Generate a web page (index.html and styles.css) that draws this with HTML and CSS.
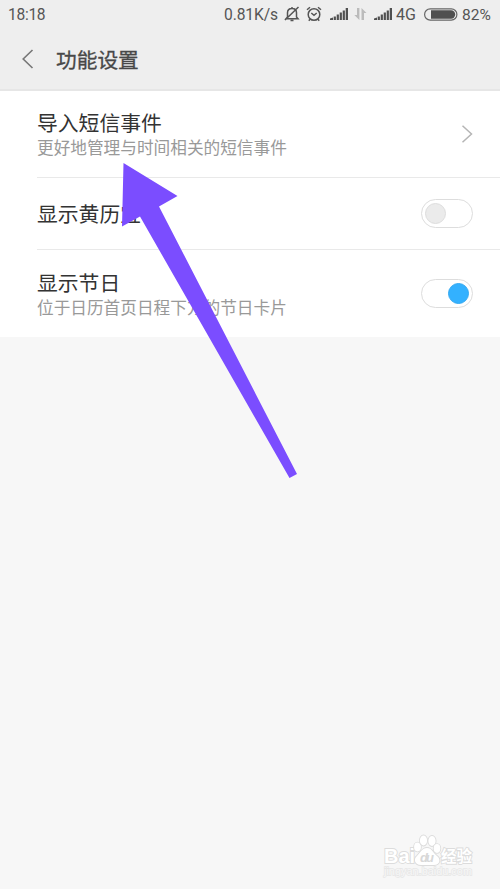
FILE: index.html
```html
<!DOCTYPE html>
<html lang="zh-CN">
<head>
<meta charset="utf-8">
<title>功能设置</title>
<link rel="stylesheet" href="styles.css">
</head>
<body>
<header class="header">
  <div class="status">
    <span class="time">18:18</span>
    <span class="speed">0.81K/s</span>
    <svg class="bell" width="16" height="16" viewBox="0 0 16 16"><path d="M3.5 11V6.8C3.5 4 5.2 2.5 8 2.5S12.5 4 12.5 6.8V11l1.5 1.7H2L3.5 11M8 1v1.5M6.5 14.5h3M1 14L14.5 1"/></svg>
    <svg class="alarm" width="16" height="16" viewBox="0 0 16 16"><circle cx="8" cy="8.5" r="5.8"/><path d="M1 3.8L4 1.2M12 1.2l3 2.6M5.3 7L8 9.3 10.7 7M4 13.2l-1.2 1.5M12 13.2l1.2 1.5"/></svg>
    <svg class="signal" width="18" height="12" viewBox="0 0 18 12"><path d="M0 12v-1.5l3-1V12zM3.7 12V8.5h2.2V12zM6.7 12V6.5h2.2V12zM9.7 12V4.5h2.2V12zM12.7 12V2.5h2.2V12zM15.7 12V0H18v12z"/></svg>
    <svg class="data" width="13" height="12" viewBox="0 0 13 12"><path d="M5.4 0v12L.3 7H3V0zM7.5 12V0l5 5H10v7z"/></svg>
    <svg class="signal second" width="18" height="12" viewBox="0 0 18 12"><path d="M0 12v-1.5l3-1V12zM3.7 12V8.5h2.2V12zM6.7 12V6.5h2.2V12zM9.7 12V4.5h2.2V12zM12.7 12V2.5h2.2V12zM15.7 12V0H18v12z"/></svg>
    <span class="network">4G</span>
    <svg class="battery" width="34" height="13" viewBox="0 0 34 13"><rect class="case" x=".6" y=".9" width="32.3" height="11.2" rx="5.6"/><path d="M7 2.3h20a4.2 4.2 0 0 1 0 8.4H7z"/></svg>
    <span class="percent">82%</span>
  </div>
  <div class="titlebar">
    <svg class="back" width="12" height="20" viewBox="0 0 12 20"><path d="M10.5 1L1.2 10l9.3 9"/></svg>
    <h1>功能设置</h1>
  </div>
</header>
<main class="list">
  <section class="row first">
    <div><h2>导入短信事件</h2><p>更好地管理与时间相关的短信事件</p></div>
    <svg class="chevron" width="12" height="18" viewBox="0 0 12 18"><path d="M1.5 .7L10.5 9l-9 8.3"/></svg>
  </section>
  <section class="row short">
    <h2>显示黄历宜</h2>
    <span class="switch"><i></i></span>
  </section>
  <section class="row last">
    <div><h2>显示节日</h2><p>位于日历首页日程下方的节日卡片</p></div>
    <span class="switch on"><i></i></span>
  </section>
</main>
<svg class="arrow" width="500" height="500" viewBox="0 0 500 500"><path d="M123.5 163L177.5 196 159 206.5 297 474 289.5 478 140 216.5 122 226.5z"/></svg>
<svg class="watermark" width="100" height="54" viewBox="0 0 100 54">
  <text class="brand" x="4" y="33" textLength="31" lengthAdjust="spacingAndGlyphs">Bai</text>
  <g class="paw"><ellipse cx="37.5" cy="17" rx="3.4" ry="4.4"/><ellipse cx="43.5" cy="10.5" rx="3.6" ry="5"/><ellipse cx="52" cy="11" rx="3.6" ry="5"/><ellipse cx="57" cy="18.5" rx="3.3" ry="4.4"/><path d="M47 18c-5 0-7 5-10 8-4 3-2 9 4 9h13c6 0 7-6 3-9s-5-8-10-8z"/></g>
  <text class="du" x="40" y="32" textLength="14">du</text>
  <text class="cn" x="61" y="32" textLength="31">经验</text>
  <text class="url" x="4" y="45" textLength="88" lengthAdjust="spacingAndGlyphs">jingyan.baidu.com</text>
</svg>
</body>
</html>
```
FILE: styles.css
```css
* { box-sizing: border-box; }
body { margin: 0; width: 500px; height: 889px; overflow: hidden; position: relative; background: #f7f7f7; font-family: "Noto Sans CJK SC", sans-serif; }
.header { height: 91px; background: #eee; border-bottom: 2px solid #e6e6e6; }
.status { height: 29px; display: flex; align-items: center; padding: 0 8px; font: 16px/29px Roboto, sans-serif; color: #555; white-space: nowrap; }
.time { width: 216px; font-size: 15.6px; letter-spacing: -.3px; padding-top: 1px; }
.speed { width: 60px; font-size: 15.6px; letter-spacing: -.1px; padding-top: 1px; }
.percent { margin-left: 4px; font-size: 15.5px; padding-top: 1px; }
.status svg { flex: none; fill: #505050; }
.status .bell, .status .alarm { fill: none; stroke: #555; stroke-width: 1.5; margin-top: -2px; }
.alarm { margin-left: 6px; }
.status .signal { margin-left: 8px; margin-top: -1px; }
.status .data { fill: #bbb; margin-left: 6px; margin-top: -1px; }
.status .second { margin-left: 7px; }
.network { margin-left: 4px; width: 22px; }
.battery { margin-left: 6px; margin-top: -1px; }
.battery .case { fill: none; stroke: #666; stroke-width: 1.2; }
.titlebar { height: 60px; display: flex; align-items: center; padding-left: 22px; }
.back { fill: none; stroke: #777; stroke-width: 1.6; }
h1, h2, p { margin: 0; font-weight: 400; white-space: nowrap; }
h1 { margin-left: 22px; font-size: 20.7px; line-height: 30px; color: #484848; -webkit-text-stroke: .3px #484848; }
.list { background: #fff; padding-left: 37px; height: 246px; }
.row { display: flex; align-items: center; justify-content: space-between; padding-right: 27px; }
.row + .row { border-top: 1px solid #e9e9e9; }
.first { height: 86px; padding-bottom: 1px; }
.short { height: 72px; }
.last { height: 87px; }
.last > div { padding-top: 2px; }
.short h2 { padding-bottom: 1px; }
h2 { font-size: 20.8px; line-height: 26px; color: #333; }
p { font-size: 16.67px; line-height: 24px; color: #999; }
.chevron { fill: none; stroke: #b5b5b5; stroke-width: 1.5; }
.switch { width: 52px; height: 29px; border: 1px solid #ddd; border-radius: 15px; padding: 3px; display: flex; align-items: center; }
.switch i { width: 21px; height: 21px; border-radius: 50%; background: #ebebeb; border: 1px solid #ddd; }
.switch.on { justify-content: flex-end; }
.switch.on i { background: #33b1ff; border-color: #33a9f2; }
.arrow { position: absolute; left: 0; top: 0; fill: #7b4dff; }
.watermark { position: absolute; left: 380px; top: 830px; fill: #fff; stroke: #dcdcdc; stroke-width: 1.8; paint-order: stroke; font-family: "Liberation Sans", "Noto Sans CJK SC", sans-serif; }
.brand { font-size: 20px; font-weight: 700; }
.du { font-size: 13px; font-weight: 700; font-style: italic; fill: #d8d8d8; stroke: none; }
.cn { font-size: 15.5px; font-weight: 700; }
.url { font-size: 11px; fill: #f7f7f7; stroke: #e6e6e6; stroke-width: 1.4; }
```
